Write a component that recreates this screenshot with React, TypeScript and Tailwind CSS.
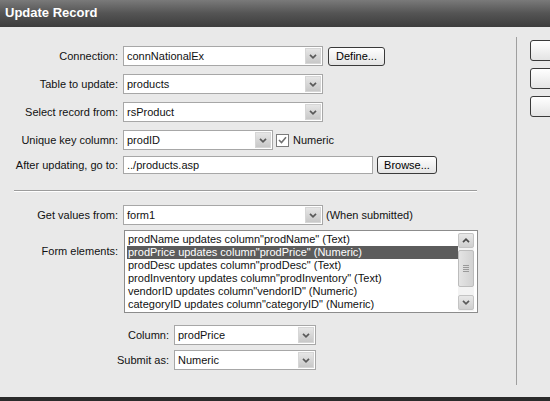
import React from 'react';

const Chevron = () => (
  <svg width="8" height="5" viewBox="0 0 8 5">
    <path d="M1 0.8l3 3 3-3" stroke="#5a5a5a" strokeWidth="1.7" fill="none" />
  </svg>
);

const Select = ({ value, width }: { value: string; width: string }) => (
  <div className={`flex h-5 ${width} border border-[#a7a7a7] bg-white`}>
    <span className="flex-1 truncate pl-[3px] leading-[18px]">{value}</span>
    <span className="my-px mr-px flex w-4 items-center justify-center border border-[#d6d6d6] bg-gradient-to-b from-[#e6e6e6] to-[#c8c8c8]">
      <Chevron />
    </span>
  </div>
);

const Button = ({ label, width, height }: { label: string; width: string; height: string }) => (
  <button
    className={`${width} ${height} rounded-[3px] border border-[#3a3a3a] bg-gradient-to-b from-white to-[#e4e4e4] text-[11px] leading-none text-black`}
  >
    {label}
  </button>
);

const Row = ({
  label,
  labelWidth = 'w-[118px]',
  className = '',
  children,
}: {
  label: string;
  labelWidth?: string;
  className?: string;
  children: React.ReactNode;
}) => (
  <div className={`flex items-center gap-[5px] ${className}`}>
    <span className={`${labelWidth} shrink-0 text-right`}>{label}</span>
    <div className="flex items-center">{children}</div>
  </div>
);

const formElements = [
  'prodName updates column"prodName" (Text)',
  'prodPrice updates column"prodPrice" (Numeric)',
  'prodDesc updates column"prodDesc" (Text)',
  'prodInventory updates column"prodInventory" (Text)',
  'vendorID updates column"vendorID" (Numeric)',
  'categoryID updates column"categoryID" (Numeric)',
];

export default function App() {
  return (
    <div className="flex h-[401px] w-[550px] flex-col overflow-hidden bg-[#e9e9e9] font-['Liberation_Sans',Arial,sans-serif] text-[11px] text-[#111]">
      {/* title bar */}
      <div className="flex h-[27px] shrink-0 items-center bg-gradient-to-b from-[#7a7a7a] via-[#545454] to-[#3d3d3d] pl-[5px] pb-px">
        <span className="text-[13px] font-bold text-white">Update Record</span>
      </div>

      <div className="flex min-h-0 flex-1">
        {/* form */}
        <div className="w-[516px] shrink-0 pt-[19px]">
          <Row label="Connection:">
            <Select value="connNationalEx" width="w-[200px]" />
            <span className="ml-[5px]">
              <Button label="Define..." width="w-[57px]" height="h-[19px]" />
            </span>
          </Row>
          <Row label="Table to update:" className="mt-2">
            <Select value="products" width="w-[200px]" />
          </Row>
          <Row label="Select record from:" className="mt-2">
            <Select value="rsProduct" width="w-[200px]" />
          </Row>
          <Row label="Unique key column:" className="mt-2">
            <Select value="prodID" width="w-[150px]" />
            <span className="ml-[3px] flex h-[13px] w-[13px] items-center justify-center border border-[#7b7b7b] bg-white">
              <svg width="9" height="8" viewBox="0 0 9 8">
                <path d="M1 4l2.5 2.5L8 1.2" stroke="#707070" strokeWidth="1.6" fill="none" />
              </svg>
            </span>
            <span className="ml-[4px]">Numeric</span>
          </Row>
          <Row label="After updating, go to:" className="mt-[6px]">
            <div className="h-[18px] w-[250px] border border-[#a7a7a7] bg-white pl-[3px] leading-[16px]">
              ../products.asp
            </div>
            <span className="ml-[4px]">
              <Button label="Browse..." width="w-[60px]" height="h-[18px]" />
            </span>
          </Row>

          <div className="ml-[14px] mt-4 w-[463px] border-t border-b border-t-[#9c9c9c] border-b-white" />

          <Row label="Get values from:" className="mt-[13px]">
            <Select value="form1" width="w-[200px]" />
            <span className="ml-[3px]">(When submitted)</span>
          </Row>

          <div className="mt-[5px] flex items-start gap-[6px]">
            <span className="w-[118px] shrink-0 pt-[13px] text-right">Form elements:</span>
            <div className="flex h-[83px] w-[354px] border border-[#8c8c8c] bg-white pt-[2px] pl-[2px] pr-[3px]">
              <ul className="flex-1 overflow-hidden">
                {formElements.map((item, i) => (
                  <li
                    key={item}
                    className={`h-[13px] whitespace-nowrap pl-px leading-[13px] ${
                      i === 1 ? 'bg-[#5c5c5c] text-white' : ''
                    }`}
                  >
                    {item}
                  </li>
                ))}
              </ul>
              <div className="flex h-[78px] w-4 shrink-0 flex-col bg-[#f3f3f3]">
                <span className="flex h-[15px] items-center justify-center rounded-[2px] border border-[#c4c4c4] bg-gradient-to-b from-[#e8e8e8] to-[#cfcfcf]">
                  <svg width="8" height="5" viewBox="0 0 8 5">
                    <path d="M1 4.2l3-3 3 3" stroke="#4a4a4a" strokeWidth="1.7" fill="none" />
                  </svg>
                </span>
                <span className="mt-[2px] flex h-[37px] flex-col items-center justify-center gap-px rounded-[2px] border border-[#bcbcbc] bg-gradient-to-r from-[#e4e4e4] to-[#d2d2d2]">
                  <span className="h-px w-[6px] bg-[#9a9a9a]" />
                  <span className="h-px w-[6px] bg-[#9a9a9a]" />
                  <span className="h-px w-[6px] bg-[#9a9a9a]" />
                  <span className="h-px w-[6px] bg-[#9a9a9a]" />
                </span>
                <span className="flex-1" />
                <span className="mb-px flex h-[15px] items-center justify-center rounded-[2px] border border-[#c4c4c4] bg-gradient-to-b from-[#e8e8e8] to-[#cfcfcf]">
                  <Chevron />
                </span>
              </div>
            </div>
          </div>

          <Row label="Column:" labelWidth="w-[169px]" className="mt-[12px]">
            <Select value="prodPrice" width="w-[142px]" />
          </Row>
          <Row label="Submit as:" labelWidth="w-[169px]" className="mt-[5px]">
            <Select value="Numeric" width="w-[142px]" />
          </Row>
        </div>

        {/* divider + dialog buttons */}
        <div className="mt-[10px] mb-[12px] w-px shrink-0 bg-[#9f9f9f]" />
        <div className="ml-[13px] flex flex-col gap-[7px] pt-[13px]">
          <Button label="" width="w-[75px]" height="h-[21px]" />
          <Button label="" width="w-[75px]" height="h-[21px]" />
          <Button label="" width="w-[75px]" height="h-[21px]" />
        </div>
      </div>

      <div className="h-1 shrink-0 bg-[#2b2b2b]" />
    </div>
  );
}
